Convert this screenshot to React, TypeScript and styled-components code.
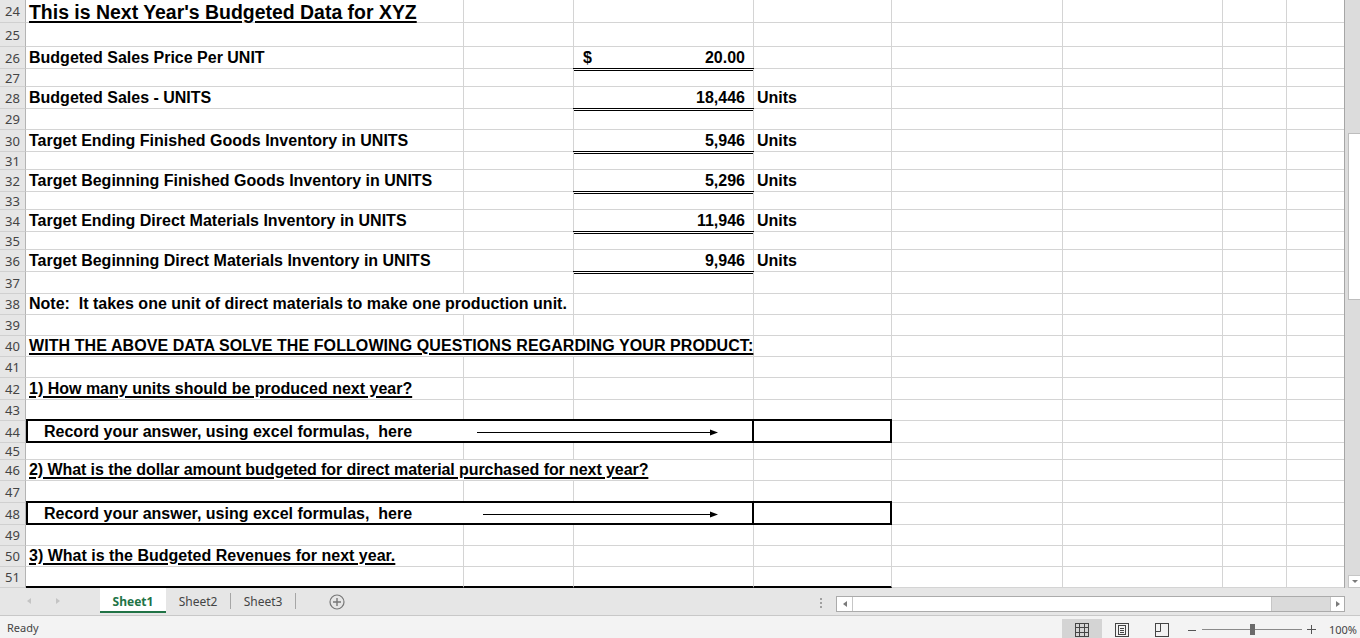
import React, { ReactNode } from 'react'
import styled, { createGlobalStyle, css } from 'styled-components'

const GRID = '#d4d4d4'
const GREEN = '#217346'
const UI_FONT = `'Segoe UI', 'Noto Sans', sans-serif`

// widths of columns A..H, each one counts its own right gridline
const COLS = [438, 110, 180, 138, 171, 160, 64, 57]

const GlobalStyle = createGlobalStyle`
  html, body {
    margin: 0;
    padding: 0;
    overflow: hidden;
    background: #fff;
  }
  body {
    font-family: 'Liberation Sans', Arial, sans-serif;
  }
`

const Window = styled.div`
  width: 1360px;
  height: 638px;
  display: flex;
  flex-direction: column;
  overflow: hidden;
`

const SheetArea = styled.div`
  flex: none;
  height: 588px;
  display: flex;
`

const Grid = styled.div`
  width: 1344px;
  display: flex;
  flex-direction: column;
  font-size: 16px;
  font-weight: 700;
  line-height: 18px;
  color: #000;
`

const Row = styled.div<{ $h: number }>`
  flex: none;
  display: flex;
  height: ${(p) => p.$h}px;
`

const RowHead = styled.div`
  flex: none;
  width: 26px;
  box-sizing: border-box;
  display: flex;
  align-items: center;
  justify-content: center;
  background: #e6e6e6;
  border-right: 1px solid #b4b4b4;
  border-bottom: 1px solid #d0d0d0;
  font-family: ${UI_FONT};
  font-size: 13px;
  font-weight: 400;
  color: #444;
`

type Align = 'left' | 'right' | 'split'

const Cell = styled.div<{ $w: number; $align?: Align; $double?: boolean; $rule?: boolean }>`
  position: relative;
  flex: none;
  box-sizing: border-box;
  width: ${(p) => p.$w}px;
  height: 100%;
  display: flex;
  align-items: flex-end;
  padding: 0 3px 1px;
  white-space: pre;
  border-right: 1px solid ${GRID};
  border-bottom: 1px solid ${GRID};

  &:last-child {
    border-right: none;
  }

  ${(p) =>
    p.$align === 'right' &&
    css`
      justify-content: flex-end;
      padding-right: 8px;
    `}
  ${(p) =>
    p.$align === 'split' &&
    css`
      justify-content: space-between;
      padding: 0 8px 1px 9px;
    `}
  ${(p) =>
    p.$rule &&
    css`
      border-bottom: 2px solid #000;
    `}
  ${(p) =>
    p.$double &&
    css`
      &::after {
        content: '';
        position: absolute;
        left: -1px;
        right: -1px;
        bottom: -3px;
        height: 1px;
        border-top: 1px solid #000;
        border-bottom: 1px solid #000;
      }
    `}
`

// thick outlined answer box, pulled up so its top edge covers the gridline above
const Box = styled.div<{ $w: number; $end?: boolean }>`
  position: relative;
  flex: none;
  box-sizing: border-box;
  width: ${(p) => p.$w}px;
  height: calc(100% + 2px);
  margin-top: -2px;
  display: flex;
  align-items: flex-end;
  padding-left: 16px;
  white-space: pre;
  border: 2px solid #000;
  ${(p) => p.$end && 'border-left: none;'}
`

const Arrow = styled.svg<{ $left: number; $w: number }>`
  position: absolute;
  top: 7px;
  left: ${(p) => p.$left}px;
  width: ${(p) => p.$w}px;
  height: 9px;
`

const Title = styled.span`
  font-size: 19.45px;
  line-height: 20px;
  margin-bottom: -1px;
  text-decoration: underline;
  text-decoration-thickness: 2px;
  text-underline-offset: 1.5px;
`

const U = styled.span<{ $track?: number }>`
  text-decoration: underline;
  text-decoration-thickness: 2px;
  text-underline-offset: 2px;
  letter-spacing: ${(p) => p.$track ?? 0}px;
`

const VScroll = styled.div`
  flex: none;
  width: 16px;
  box-sizing: border-box;
  display: flex;
  flex-direction: column;
  padding-top: 133px;
  background: #dcdcdc;
  border-left: 1px solid #a6a6a6;
`

const VThumb = styled.div`
  height: 167px;
  margin-left: 3px;
  box-sizing: border-box;
  background: #fff;
  border: 1px solid #bdbdbd;
  border-right: none;
`

const VDown = styled.div`
  margin-top: auto;
  margin-left: 3px;
  height: 13px;
  box-sizing: border-box;
  display: flex;
  align-items: center;
  justify-content: center;
  background: #fff;
  border: 1px solid #c6c6c6;
  border-right: none;

  &::before {
    content: '';
    border-left: 3px solid transparent;
    border-right: 3px solid transparent;
    border-top: 3px solid #7a7a7a;
  }
`

const TabBar = styled.div`
  flex: none;
  height: 28px;
  box-sizing: border-box;
  display: flex;
  align-items: flex-start;
  background: #e6e6e6;
  border-bottom: 1px solid #c8c8c8;
  font-family: ${UI_FONT};
  font-size: 12px;
  color: #444;
`

const SheetNav = styled.div`
  width: 100px;
  height: 26px;
  box-sizing: border-box;
  display: flex;
  align-items: center;
  gap: 25px;
  padding-left: 27px;
`

const NavArrow = styled.span<{ $dir: 'left' | 'right' }>`
  width: 0;
  height: 0;
  border-top: 3.5px solid transparent;
  border-bottom: 3.5px solid transparent;
  ${(p) =>
    p.$dir === 'left'
      ? css`
          border-right: 4px solid #c4c4c4;
        `
      : css`
          border-left: 4px solid #c4c4c4;
        `}
`

const Tab = styled.div<{ $active?: boolean }>`
  box-sizing: border-box;
  width: 65px;
  display: flex;
  align-items: center;
  justify-content: center;
  ${(p) =>
    p.$active
      ? css`
          width: 66px;
          height: 25px;
          padding-top: 4px;
          background: #fff;
          border-bottom: 2px solid ${GREEN};
          color: ${GREEN};
          font-weight: 700;
        `
      : css`
          height: 16px;
          margin-top: 5px;
          border-right: 1px solid #a6a6a6;
        `}
`

const AddSheet = styled.svg`
  width: 16px;
  height: 16px;
  margin: 6px 0 0 33px;
`

const SplitDots = styled.div`
  margin: 10px 14px 0 auto;
  display: flex;
  flex-direction: column;
  gap: 2px;

  & > span {
    width: 2px;
    height: 2px;
    background: #a0a0a0;
  }
`

const HScroll = styled.div`
  width: 509px;
  height: 16px;
  margin: 8px 15px 0 0;
  box-sizing: border-box;
  display: flex;
  border: 1px solid #ababab;
  background: #dadada;
`

const ScrollBtn = styled.div<{ $dir: 'left' | 'right' }>`
  width: ${(p) => (p.$dir === 'left' ? 15 : 13)}px;
  display: flex;
  align-items: center;
  justify-content: center;
  background: #fff;
  ${(p) =>
    p.$dir === 'left'
      ? 'border-right: 1px solid #c6c6c6;'
      : 'border-left: 1px solid #c6c6c6; margin-left: auto;'}

  &::before {
    content: '';
    border-top: 3.5px solid transparent;
    border-bottom: 3.5px solid transparent;
    ${(p) =>
      p.$dir === 'left' ? 'border-right: 4px solid #7a7a7a;' : 'border-left: 4px solid #7a7a7a;'}
  }
`

const HThumb = styled.div`
  width: 418px;
  background: #fff;
  border-right: 1px solid #c6c6c6;
`

const StatusBar = styled.div`
  flex: 1;
  display: flex;
  align-items: stretch;
  background: #f3f3f3;
  font-family: ${UI_FONT};
  font-size: 11px;
  color: #444;
`

const Ready = styled.span`
  display: flex;
  align-items: center;
  margin: 0 auto 0 7px;
`

const ViewButton = styled.div<{ $active?: boolean }>`
  width: 40px;
  margin-top: 3px;
  padding-top: 2px;
  display: flex;
  align-items: center;
  justify-content: center;
  background: ${(p) => (p.$active ? '#d4d4d4' : 'transparent')};
`

const ZoomGroup = styled.div`
  display: flex;
  align-items: center;
  padding: 5px 3px 0 6px;
`

const Slider = styled.div`
  width: 100px;
  margin: 0 5px 0 6px;
  display: flex;
  align-items: center;

  &::before,
  &::after {
    content: '';
    height: 1px;
    background: #8a8a8a;
  }
  &::before {
    width: 48px;
  }
  &::after {
    flex: 1;
  }
`

const SliderThumb = styled.span`
  width: 5px;
  height: 11px;
  background: #6a6a6a;
`

const Percent = styled.span`
  margin-left: 13px;
`

type Seg = {
  at: number
  span?: number
  kind?: 'text' | 'money' | 'num' | 'box' | 'boxEnd'
  content?: ReactNode
  arrow?: [number, number]
}

type RowDef = { n: number; h: number; segs?: Seg[]; rule?: boolean }

const stock = (n: number, label: string, value: string): RowDef => ({
  n,
  h: 22,
  segs: [
    { at: 0, content: label },
    { at: 2, kind: 'num', content: value },
    { at: 3, content: 'Units' },
  ],
})

const answer = (n: number, arrow: [number, number]): RowDef => ({
  n,
  h: 22,
  segs: [
    { at: 0, span: 3, kind: 'box', content: 'Record your answer, using excel formulas,  here', arrow },
    { at: 3, kind: 'boxEnd' },
  ],
})

const ROWS: RowDef[] = [
  { n: 24, h: 23, segs: [{ at: 0, content: <Title>This is Next Year's Budgeted Data for XYZ</Title> }] },
  { n: 25, h: 24 },
  {
    n: 26,
    h: 22,
    segs: [
      { at: 0, content: 'Budgeted Sales Price Per UNIT' },
      { at: 2, kind: 'money', content: '20.00' },
    ],
  },
  { n: 27, h: 18 },
  stock(28, 'Budgeted Sales - UNITS', '18,446'),
  { n: 29, h: 21 },
  stock(30, 'Target Ending Finished Goods Inventory in UNITS', '5,946'),
  { n: 31, h: 18 },
  stock(32, 'Target Beginning Finished Goods Inventory in UNITS', '5,296'),
  { n: 33, h: 18 },
  stock(34, 'Target Ending Direct Materials Inventory in UNITS', '11,946'),
  { n: 35, h: 18 },
  stock(36, 'Target Beginning Direct Materials Inventory in UNITS', '9,946'),
  { n: 37, h: 22 },
  {
    n: 38,
    h: 21,
    segs: [{ at: 0, span: 2, content: 'Note:  It takes one unit of direct materials to make one production unit.' }],
  },
  { n: 39, h: 21 },
  {
    n: 40,
    h: 21,
    segs: [
      {
        at: 0,
        span: 3,
        content: (
          <U $track={0.08}>WITH THE ABOVE DATA SOLVE THE FOLLOWING QUESTIONS REGARDING YOUR PRODUCT:</U>
        ),
      },
    ],
  },
  { n: 41, h: 21 },
  { n: 42, h: 22, segs: [{ at: 0, content: <U>1) How many units should be produced next year?</U> }] },
  { n: 43, h: 21 },
  answer(44, [449, 241]),
  { n: 45, h: 17 },
  {
    n: 46,
    h: 21,
    segs: [
      {
        at: 0,
        span: 3,
        content: (
          <U $track={-0.08}>2) What is the dollar amount budgeted for direct material purchased for next year?</U>
        ),
      },
    ],
  },
  { n: 47, h: 22 },
  answer(48, [455, 235]),
  { n: 49, h: 21 },
  { n: 50, h: 21, segs: [{ at: 0, content: <U>3) What is the Budgeted Revenues for next year.</U> }] },
  { n: 51, h: 21, rule: true },
]

const ArrowLine = ({ left, w }: { left: number; w: number }) => (
  <Arrow $left={left} $w={w} viewBox={`0 0 ${w} 9`}>
    <line x1="0" y1="4.5" x2={w - 6} y2="4.5" stroke="#000" strokeWidth="1" />
    <polygon points={`${w - 8},1.5 ${w},4.5 ${w - 8},7.5`} fill="#000" />
  </Arrow>
)

const SheetRow = ({ def }: { def: RowDef }) => {
  const cells: ReactNode[] = []
  let i = 0
  while (i < COLS.length) {
    const seg = def.segs?.find((s) => s.at === i)
    const span = seg?.span ?? 1
    const w = COLS.slice(i, i + span).reduce((a, b) => a + b, 0)
    const kind = seg?.kind ?? 'text'

    if (seg && kind === 'box') {
      cells.push(
        <Box key={i} $w={w}>
          {seg.content}
          {seg.arrow && <ArrowLine left={seg.arrow[0]} w={seg.arrow[1]} />}
        </Box>
      )
    } else if (seg && kind === 'boxEnd') {
      cells.push(<Box key={i} $w={w} $end />)
    } else if (seg && kind === 'money') {
      cells.push(
        <Cell key={i} $w={w} $align="split" $double>
          <span>$</span>
          <span>{seg.content}</span>
        </Cell>
      )
    } else if (seg && kind === 'num') {
      cells.push(
        <Cell key={i} $w={w} $align="right" $double>
          {seg.content}
        </Cell>
      )
    } else {
      cells.push(
        <Cell key={i} $w={w} $rule={def.rule && i < 4}>
          {seg?.content}
        </Cell>
      )
    }
    i += span
  }

  return (
    <Row $h={def.h}>
      <RowHead>{def.n}</RowHead>
      {cells}
    </Row>
  )
}

const NormalIcon = () => (
  <svg width="14" height="14" viewBox="0 0 14 14" fill="none" stroke="#444" strokeWidth="1">
    <rect x="0.5" y="0.5" width="13" height="13" />
    <path d="M4.5 0.5V13.5M9.5 0.5V13.5M0.5 4.5H13.5M0.5 9.5H13.5" />
  </svg>
)

const LayoutIcon = () => (
  <svg width="14" height="14" viewBox="0 0 14 14" fill="none" stroke="#444" strokeWidth="1">
    <rect x="0.5" y="0.5" width="13" height="13" />
    <rect x="3.5" y="2.5" width="7" height="9" />
    <path d="M5 5.5H9M5 7.5H9M5 9.5H9" />
  </svg>
)

const BreakIcon = () => (
  <svg width="14" height="14" viewBox="0 0 14 14" fill="none" stroke="#444" strokeWidth="1">
    <rect x="0.5" y="0.5" width="13" height="13" />
    <path d="M0.5 8.5H5.5V0.5" />
  </svg>
)

const MinusIcon = () => (
  <svg width="8" height="8" viewBox="0 0 8 8">
    <path d="M0 4.5H8" stroke="#555" strokeWidth="1" />
  </svg>
)

const PlusIcon = () => (
  <svg width="9" height="9" viewBox="0 0 9 9">
    <path d="M0 4.5H9M4.5 0V9" stroke="#555" strokeWidth="1" />
  </svg>
)

export default function App() {
  return (
    <>
      <GlobalStyle />
      <Window>
        <SheetArea>
          <Grid>
            {ROWS.map((r) => (
              <SheetRow key={r.n} def={r} />
            ))}
          </Grid>
          <VScroll>
            <VThumb />
            <VDown />
          </VScroll>
        </SheetArea>

        <TabBar>
          <SheetNav>
            <NavArrow $dir="left" />
            <NavArrow $dir="right" />
          </SheetNav>
          <Tab $active>Sheet1</Tab>
          <Tab>Sheet2</Tab>
          <Tab>Sheet3</Tab>
          <AddSheet viewBox="0 0 16 16" fill="none" stroke="#777">
            <circle cx="8" cy="8" r="7" strokeWidth="1.2" />
            <path d="M8 4V12M4 8H12" strokeWidth="1.4" />
          </AddSheet>
          <SplitDots>
            <span />
            <span />
            <span />
          </SplitDots>
          <HScroll>
            <ScrollBtn $dir="left" />
            <HThumb />
            <ScrollBtn $dir="right" />
          </HScroll>
        </TabBar>

        <StatusBar>
          <Ready>Ready</Ready>
          <ViewButton $active>
            <NormalIcon />
          </ViewButton>
          <ViewButton>
            <LayoutIcon />
          </ViewButton>
          <ViewButton>
            <BreakIcon />
          </ViewButton>
          <ZoomGroup>
            <MinusIcon />
            <Slider>
              <SliderThumb />
            </Slider>
            <PlusIcon />
            <Percent>100%</Percent>
          </ZoomGroup>
        </StatusBar>
      </Window>
    </>
  )
}
